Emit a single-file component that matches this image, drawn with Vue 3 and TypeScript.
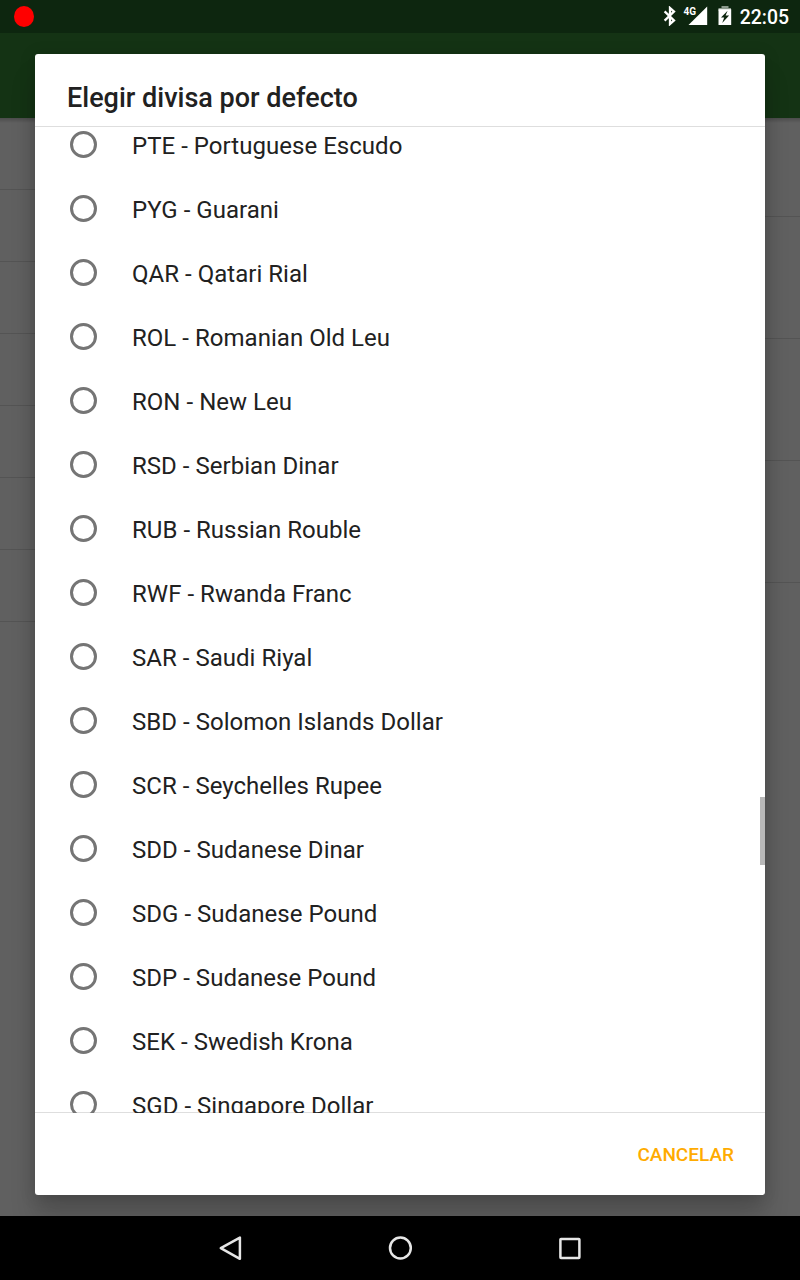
<script setup lang="ts">
interface Currency {
  code: string
  name: string
}

const currencies: Currency[] = [
  { code: 'PTE', name: 'Portuguese Escudo' },
  { code: 'PYG', name: 'Guarani' },
  { code: 'QAR', name: 'Qatari Rial' },
  { code: 'ROL', name: 'Romanian Old Leu' },
  { code: 'RON', name: 'New Leu' },
  { code: 'RSD', name: 'Serbian Dinar' },
  { code: 'RUB', name: 'Russian Rouble' },
  { code: 'RWF', name: 'Rwanda Franc' },
  { code: 'SAR', name: 'Saudi Riyal' },
  { code: 'SBD', name: 'Solomon Islands Dollar' },
  { code: 'SCR', name: 'Seychelles Rupee' },
  { code: 'SDD', name: 'Sudanese Dinar' },
  { code: 'SDG', name: 'Sudanese Pound' },
  { code: 'SDP', name: 'Sudanese Pound' },
  { code: 'SEK', name: 'Swedish Krona' },
  { code: 'SGD', name: 'Singapore Dollar' },
]
</script>

<template>
  <div class="screen">
    <header class="status">
      <span class="record"></span>
      <div class="status-icons">
        <svg class="bluetooth" width="14" height="20" viewBox="0 0 14 20" fill="none" stroke="#fff" stroke-width="2.3">
          <path d="M1.6 5.4 11 14.4 7 18V2l4 3.6-9.4 9" />
        </svg>
        <svg class="signal" width="26" height="22" viewBox="0 0 26 22">
          <path d="M24.2 2.5V21H5.5z" fill="#fff" />
          <text x="0.5" y="11" class="network">4G</text>
        </svg>
        <svg class="battery" width="14" height="20" viewBox="0 0 14 20">
          <path d="M3.5 0h7v2H13v3H.5V2h3z" fill="#8a988b" />
          <path d="M.5 3.2h12.7V19H.5z" fill="#fff" />
          <path d="M9.6 4.8 3 11.6h3.2L4.2 17l6.9-7.4H7.6z" fill="#0d260f" />
        </svg>
        <span class="clock">22:05</span>
      </div>
    </header>
    <div class="toolbar"></div>
    <main class="backdrop">
      <div class="pane left"><i v-for="n in 7" :key="n"></i></div>
      <div class="pane right"><i v-for="n in 4" :key="n"></i></div>
    </main>
    <nav class="navigation">
      <svg width="30" height="30" viewBox="0 0 30 30"><path d="M24.9 4.6v21.2L5.8 15.2z" /></svg>
      <svg width="30" height="30" viewBox="0 0 30 30"><circle cx="15.4" cy="15" r="10.4" /></svg>
      <svg width="30" height="30" viewBox="0 0 30 30"><rect x="5.4" y="5.9" width="19" height="19" rx=".6" /></svg>
    </nav>

    <section class="dialog" role="dialog">
      <h1>Elegir divisa por defecto</h1>
      <div class="viewport">
        <ul>
          <li v-for="currency in currencies" :key="currency.code">
            <span class="radio"></span>
            <span class="label">{{ currency.code }} - {{ currency.name }}</span>
          </li>
        </ul>
        <span class="scrollbar"></span>
      </div>
      <footer><button type="button">CANCELAR</button></footer>
    </section>
  </div>
</template>

<style>
body {
  margin: 0;
}
</style>

<style scoped>
.screen {
  position: relative;
  display: flex;
  flex-direction: column;
  width: 800px;
  height: 1280px;
  overflow: hidden;
  background: #606060;
  font-family: Roboto, "Noto Sans", sans-serif;
}
.status {
  display: flex;
  box-sizing: border-box;
  justify-content: space-between;
  height: 33px;
  padding: 0 11px 0 14px;
  background: #0d260f;
}
.record {
  width: 20px;
  height: 21px;
  margin-top: 6px;
  border-radius: 50%;
  background: #f00;
}
.status-icons {
  display: flex;
  align-items: flex-start;
}
.bluetooth {
  margin: 6px 6px 0 0;
}
.signal {
  margin: 4px 9px 0 0;
}
.battery {
  margin: 6px 8px 0 0;
}
.network {
  font-size: 10px;
  font-weight: 700;
  fill: #fff;
}
.clock {
  color: #fff;
  font-size: 19.4px;
  font-weight: 500;
  line-height: 36px;
}
.toolbar {
  height: 85px;
  background: #143314;
}
.backdrop {
  display: flex;
  flex: 1;
  justify-content: space-between;
  background: linear-gradient(#4c4c4c, #606060 5px);
}
.pane {
  display: flex;
  flex-direction: column;
  width: 400px;
}
.pane i {
  box-sizing: border-box;
  border-bottom: 1px solid #545454;
}
.left i {
  height: 72px;
}
.right i {
  height: 122px;
}
.right i:first-child {
  height: 99px;
}
.navigation {
  position: relative;
  z-index: 2;
  display: flex;
  justify-content: center;
  gap: 140px;
  box-sizing: border-box;
  height: 64px;
  padding-top: 17px;
  background: #000;
}
.navigation svg {
  fill: none;
  stroke: #e6e6e6;
  stroke-width: 2.5;
  stroke-linejoin: round;
}
.dialog {
  position: absolute;
  inset: 54px 35px 85px;
  display: flex;
  flex-direction: column;
  border-radius: 3px;
  background: #fff;
  box-shadow: 0 24px 26px rgba(0, 0, 0, 0.16), 0 2px 16px rgba(0, 0, 0, 0.17);
}
h1 {
  box-sizing: border-box;
  height: 73px;
  margin: 0;
  padding: 28px 32px 0;
  border-bottom: 1px solid #dedede;
  color: #212121;
  font-size: 27px;
  font-weight: 500;
  line-height: 33px;
}
.viewport {
  position: relative;
  height: 986px;
  overflow: hidden;
  background: linear-gradient(#dedede, #dedede) bottom / 100% 1px no-repeat;
}
ul {
  margin: -14px 0 0;
  padding: 0;
  list-style: none;
}
li {
  display: flex;
  align-items: center;
  height: 64px;
  padding-left: 35px;
  color: #212121;
  font-size: 24px;
  line-height: 28px;
}
.label {
  padding-top: 2px;
  letter-spacing: 0.03px;
}
.radio {
  box-sizing: border-box;
  width: 27px;
  height: 27px;
  margin: 0 35px 1px 0;
  border: 3px solid #757575;
  border-radius: 50%;
}
.scrollbar {
  position: absolute;
  top: 670px;
  right: 0;
  width: 5px;
  height: 68px;
  background: #b8b8b8;
}
footer {
  display: flex;
  flex: 1;
  align-items: center;
  justify-content: flex-end;
  padding: 2px 31px 0 0;
}
button {
  padding: 0;
  border: 0;
  background: none;
  color: #ffab00;
  font: 500 19px/24px Roboto, "Noto Sans", sans-serif;
}
</style>
